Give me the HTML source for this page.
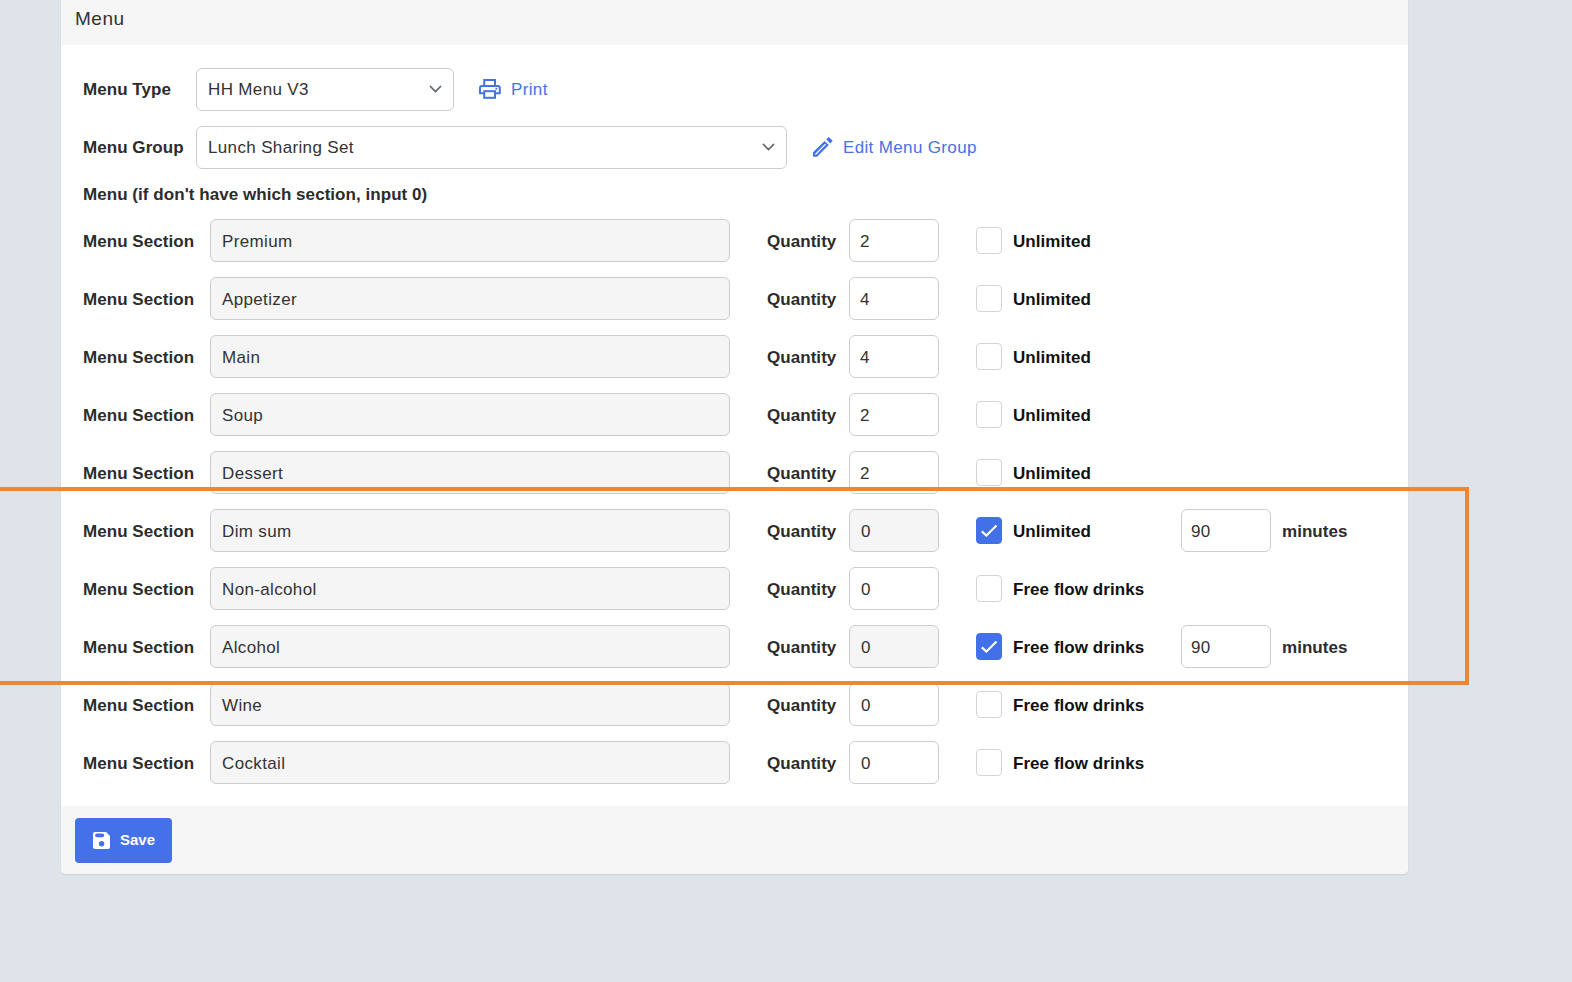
<!DOCTYPE html>
<html><head><meta charset="utf-8"><title>Menu</title>
<style>
*{box-sizing:border-box;margin:0;padding:0}
html,body{width:1572px;height:982px;overflow:hidden;background:#dfe3ea;font-family:"Liberation Sans",sans-serif;}
.abs{position:absolute}
#card{position:absolute;left:61px;top:-10px;width:1347px;height:884px;background:#fff;border-radius:5px;box-shadow:0 1px 2px rgba(0,0,0,.08);overflow:hidden}
#hdr{position:absolute;left:0;top:0;width:100%;height:55px;background:#f6f6f6}
#ftr{position:absolute;left:0;top:816px;width:100%;height:68px;background:#f6f6f6}
.t{position:absolute;font-size:17px;line-height:20px;white-space:nowrap;color:#333;letter-spacing:.35px}
.b{font-weight:bold;color:#2c2c2c;letter-spacing:.05px}
.blue{color:#4573e6}
.box{position:absolute;height:43px;border:1px solid #cdcdcd;border-radius:6px;background:#fff}
.dis{background:#f5f5f5}
.cb{position:absolute;width:26px;height:27px;border:1px solid #d4d4d4;border-radius:4px;background:#fff}
.cbk{background:#4270e8;border-color:#4270e8}
</style></head><body>
<div id="card"><div id="hdr"></div><div id="ftr"></div></div>
<div class="t" style="left:75px;top:8px;font-size:19px;line-height:22px;color:#333;letter-spacing:.5px">Menu</div>
<div class="t b" style="left:83px;top:80px">Menu Type</div>
<div class="box" style="left:196px;top:68px;width:258px"></div>
<div class="t" style="left:208px;top:80px">HH Menu V3</div>
<svg class="abs" style="left:428px;top:84px" width="15" height="10" viewBox="0 0 15 10"><path d="M2.4 2.4 L7.5 7.6 L12.6 2.4" fill="none" stroke="#62676c" stroke-width="1.5" stroke-linecap="round" stroke-linejoin="round"/></svg>
<svg class="abs" style="left:474px;top:74px" width="32" height="30" viewBox="0 0 32 30"><g fill="none" stroke="#4573e6" stroke-width="2"><path d="M10.2 12 V6.05 H21 V12"/><path d="M10.2 19.3 H6 V14 Q6 12 8 12 H23.8 Q25.8 12 25.8 14 V19.3 H21"/><rect x="10.2" y="17.2" width="10.8" height="6.6"/></g><circle cx="22.3" cy="14.7" r="1" fill="#4573e6"/></svg>
<div class="t blue" style="left:511px;top:80px">Print</div>
<div class="t b" style="left:83px;top:138px">Menu Group</div>
<div class="box" style="left:196px;top:126px;width:591px"></div>
<div class="t" style="left:208px;top:138px">Lunch Sharing Set</div>
<svg class="abs" style="left:761px;top:142px" width="15" height="10" viewBox="0 0 15 10"><path d="M2.4 2.4 L7.5 7.6 L12.6 2.4" fill="none" stroke="#62676c" stroke-width="1.5" stroke-linecap="round" stroke-linejoin="round"/></svg>
<svg class="abs" style="left:806px;top:131px" width="32" height="32" viewBox="0 0 32 32"><path fill-rule="evenodd" fill="#4573e6" d="M7 25.7 L7 21.2 L18.6 9.9 L22.8 13.9 L11.1 25.7 Z M9.0 23.1 L19.2 12.8 L20.0 13.6 L9.8 23.9 Z"/><path fill="#4573e6" d="M20.2 8.3 L22.8 5.9 L26.7 9.8 L24.3 12.4 Z"/></svg>
<div class="t blue" style="left:843px;top:138px">Edit Menu Group</div>
<div class="t b" style="left:83px;top:185px">Menu (if don't have which section, input 0)</div>
<div class="t b" style="left:83px;top:232px">Menu Section</div>
<div class="box dis" style="left:210px;top:219px;width:520px"></div>
<div class="t" style="left:222px;top:232px">Premium</div>
<div class="t b" style="left:767px;top:232px">Quantity</div>
<div class="box" style="left:849px;top:219px;width:90px"></div>
<div class="t" style="left:860px;top:232px">2</div>
<div class="cb" style="left:976px;top:227px"></div>
<div class="t b" style="left:1013px;top:232px;color:#111">Unlimited</div>
<div class="t b" style="left:83px;top:290px">Menu Section</div>
<div class="box dis" style="left:210px;top:277px;width:520px"></div>
<div class="t" style="left:222px;top:290px">Appetizer</div>
<div class="t b" style="left:767px;top:290px">Quantity</div>
<div class="box" style="left:849px;top:277px;width:90px"></div>
<div class="t" style="left:860px;top:290px">4</div>
<div class="cb" style="left:976px;top:285px"></div>
<div class="t b" style="left:1013px;top:290px;color:#111">Unlimited</div>
<div class="t b" style="left:83px;top:348px">Menu Section</div>
<div class="box dis" style="left:210px;top:335px;width:520px"></div>
<div class="t" style="left:222px;top:348px">Main</div>
<div class="t b" style="left:767px;top:348px">Quantity</div>
<div class="box" style="left:849px;top:335px;width:90px"></div>
<div class="t" style="left:860px;top:348px">4</div>
<div class="cb" style="left:976px;top:343px"></div>
<div class="t b" style="left:1013px;top:348px;color:#111">Unlimited</div>
<div class="t b" style="left:83px;top:406px">Menu Section</div>
<div class="box dis" style="left:210px;top:393px;width:520px"></div>
<div class="t" style="left:222px;top:406px">Soup</div>
<div class="t b" style="left:767px;top:406px">Quantity</div>
<div class="box" style="left:849px;top:393px;width:90px"></div>
<div class="t" style="left:860px;top:406px">2</div>
<div class="cb" style="left:976px;top:401px"></div>
<div class="t b" style="left:1013px;top:406px;color:#111">Unlimited</div>
<div class="t b" style="left:83px;top:464px">Menu Section</div>
<div class="box dis" style="left:210px;top:451px;width:520px"></div>
<div class="t" style="left:222px;top:464px">Dessert</div>
<div class="t b" style="left:767px;top:464px">Quantity</div>
<div class="box" style="left:849px;top:451px;width:90px"></div>
<div class="t" style="left:860px;top:464px">2</div>
<div class="cb" style="left:976px;top:459px"></div>
<div class="t b" style="left:1013px;top:464px;color:#111">Unlimited</div>
<div class="t b" style="left:83px;top:522px">Menu Section</div>
<div class="box dis" style="left:210px;top:509px;width:520px"></div>
<div class="t" style="left:222px;top:522px">Dim sum</div>
<div class="t b" style="left:767px;top:522px">Quantity</div>
<div class="box dis" style="left:849px;top:509px;width:90px"></div>
<div class="t" style="left:861px;top:522px">0</div>
<div class="cb cbk" style="left:976px;top:517px"><svg width="24" height="25" viewBox="0 0 24 25" style="position:absolute;left:0;top:0"><path d="M4.8 13.4 L9.4 17.6 L19.5 7.6" fill="none" stroke="#fff" stroke-width="2.1"/></svg></div>
<div class="t b" style="left:1013px;top:522px;color:#111">Unlimited</div>
<div class="box" style="left:1181px;top:509px;width:90px"></div>
<div class="t" style="left:1191px;top:522px">90</div>
<div class="t b" style="left:1282px;top:522px">minutes</div>
<div class="t b" style="left:83px;top:580px">Menu Section</div>
<div class="box dis" style="left:210px;top:567px;width:520px"></div>
<div class="t" style="left:222px;top:580px">Non-alcohol</div>
<div class="t b" style="left:767px;top:580px">Quantity</div>
<div class="box" style="left:849px;top:567px;width:90px"></div>
<div class="t" style="left:861px;top:580px">0</div>
<div class="cb" style="left:976px;top:575px"></div>
<div class="t b" style="left:1013px;top:580px;color:#111">Free flow drinks</div>
<div class="t b" style="left:83px;top:638px">Menu Section</div>
<div class="box dis" style="left:210px;top:625px;width:520px"></div>
<div class="t" style="left:222px;top:638px">Alcohol</div>
<div class="t b" style="left:767px;top:638px">Quantity</div>
<div class="box dis" style="left:849px;top:625px;width:90px"></div>
<div class="t" style="left:861px;top:638px">0</div>
<div class="cb cbk" style="left:976px;top:633px"><svg width="24" height="25" viewBox="0 0 24 25" style="position:absolute;left:0;top:0"><path d="M4.8 13.4 L9.4 17.6 L19.5 7.6" fill="none" stroke="#fff" stroke-width="2.1"/></svg></div>
<div class="t b" style="left:1013px;top:638px;color:#111">Free flow drinks</div>
<div class="box" style="left:1181px;top:625px;width:90px"></div>
<div class="t" style="left:1191px;top:638px">90</div>
<div class="t b" style="left:1282px;top:638px">minutes</div>
<div class="t b" style="left:83px;top:696px">Menu Section</div>
<div class="box dis" style="left:210px;top:683px;width:520px"></div>
<div class="t" style="left:222px;top:696px">Wine</div>
<div class="t b" style="left:767px;top:696px">Quantity</div>
<div class="box" style="left:849px;top:683px;width:90px"></div>
<div class="t" style="left:861px;top:696px">0</div>
<div class="cb" style="left:976px;top:691px"></div>
<div class="t b" style="left:1013px;top:696px;color:#111">Free flow drinks</div>
<div class="t b" style="left:83px;top:754px">Menu Section</div>
<div class="box dis" style="left:210px;top:741px;width:520px"></div>
<div class="t" style="left:222px;top:754px">Cocktail</div>
<div class="t b" style="left:767px;top:754px">Quantity</div>
<div class="box" style="left:849px;top:741px;width:90px"></div>
<div class="t" style="left:861px;top:754px">0</div>
<div class="cb" style="left:976px;top:749px"></div>
<div class="t b" style="left:1013px;top:754px;color:#111">Free flow drinks</div>
<div class="abs" style="left:-10px;top:487px;width:1479px;height:198px;border:4px solid #ec8834"></div>
<div class="abs" style="left:75px;top:818px;width:97px;height:45px;background:#4571e8;border-radius:4px"></div>
<svg class="abs" style="left:93px;top:832px" width="17" height="17" viewBox="0 0 17 17"><path d="M0 2 Q0 0 2 0 H13 L17 4 V15 Q17 17 15 17 H2 Q0 17 0 15 Z" fill="#fff"/><rect x="2.1" y="1.6" width="9.1" height="3.6" rx="1.8" fill="#4571e8"/><circle cx="8.6" cy="11.8" r="2.7" fill="#4571e8"/></svg>
<div class="t" style="left:120px;top:831px;font-size:15px;line-height:18px;font-weight:bold;color:#fff;letter-spacing:0">Save</div>
</body></html>
